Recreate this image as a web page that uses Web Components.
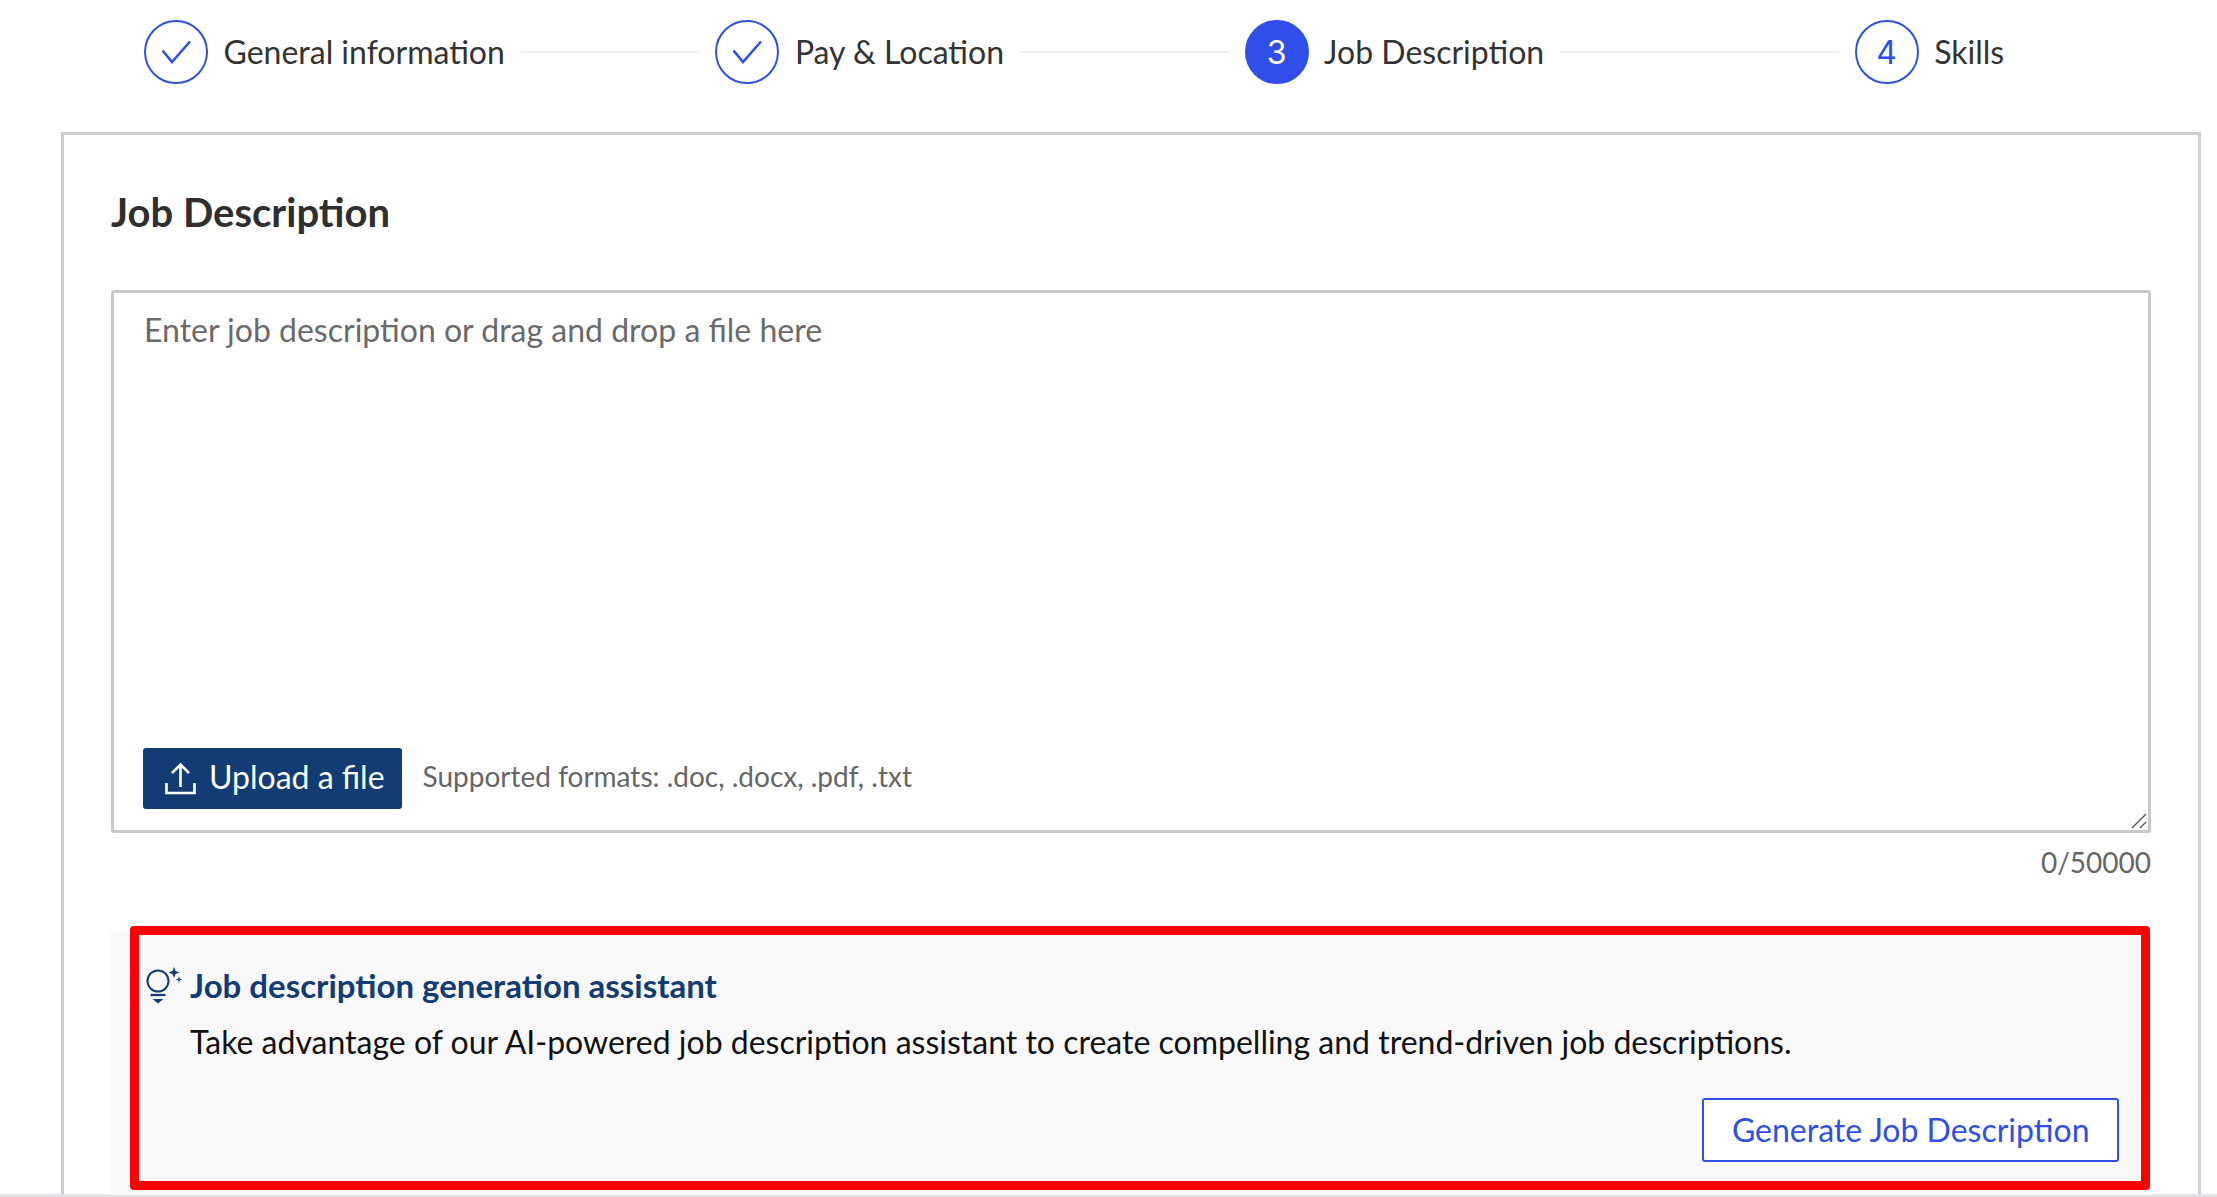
<!DOCTYPE html>
<html lang="en">
<head>
<meta charset="utf-8">
<title>Job Description</title>
<style>
  html, body { margin: 0; height: 100%; background: #fff; overflow: hidden; }
  body { font-family: Lato, "Liberation Sans", sans-serif; color: #333; }
</style>
</head>
<body>
<job-page>
  <job-stepper slot="steps">
    <step-item state="done">General information</step-item>
    <step-line style="width:178.5px"></step-line>
    <step-item state="done">Pay &amp; Location</step-item>
    <step-line style="width:208.5px"></step-line>
    <step-item state="current" num="3">Job Description</step-item>
    <step-line style="width:278.5px"></step-line>
    <step-item num="4">Skills</step-item>
  </job-stepper>
  <job-card>
    <description-box></description-box>
    <assistant-panel></assistant-panel>
  </job-card>
</job-page>

<script>
class JobPage extends HTMLElement {
  constructor() {
    super();
    this.attachShadow({ mode: 'open' }).innerHTML = `
      <style>
        :host { display: flex; flex-direction: column; height: 1197px; overflow: hidden; }
        .main { flex: 1; min-height: 0; padding: 0 16px 0 61px; }
        .edge { height: 3px; background: #dfe3e6; }
      </style>
      <slot name="steps"></slot>
      <div class="main"><slot></slot></div>
      <div class="edge"></div>
    `;
  }
}

class JobStepper extends HTMLElement {
  constructor() {
    super();
    this.attachShadow({ mode: 'open' }).innerHTML = `
      <style>
        :host { display: flex; align-items: center; gap: 16px; height: 132px; padding: 0 0 28px 144px; box-sizing: border-box; }
      </style>
      <slot></slot>
    `;
  }
}

class StepItem extends HTMLElement {
  constructor() {
    super();
    this.attachShadow({ mode: 'open' });
  }

  connectedCallback() {
    const state = this.getAttribute('state');
    const num = this.getAttribute('num') || '';
    const mark = state === 'done'
      ? `<svg width="64" height="64" viewBox="0 0 64 64"><path d="M18.5 30.5 L28 42 L46 21.5" fill="none" stroke="#2f4fe8" stroke-width="2.6"/></svg>`
      : num;
    this.shadowRoot.innerHTML = `
      <style>
        :host { display: flex; align-items: center; gap: 15.5px; flex: none; }
        .dot {
          width: 64px; height: 64px; box-sizing: border-box; border-radius: 50%;
          border: 2px solid #2f4fe8; color: #2f4fe8;
          display: flex; align-items: center; justify-content: center;
          font: 32px Inter, "Liberation Sans", sans-serif; position: relative;
        }
        .dot svg { position: absolute; left: -2px; top: -2px; }
        .dot.current { background: #2f4fe8; color: #fff; }
        .label { font-size: 32px; line-height: 40px; color: #333; white-space: nowrap; }
      </style>
      <div class="dot ${state === 'current' ? 'current' : ''}">${mark}</div>
      <div class="label"><slot></slot></div>
    `;
  }
}

class StepLine extends HTMLElement {
  constructor() {
    super();
    this.attachShadow({ mode: 'open' }).innerHTML = `
      <style>
        :host { display: block; height: 2px; background: #eee; flex: none; }
      </style>
    `;
  }
}

class JobCard extends HTMLElement {
  constructor() {
    super();
    this.attachShadow({ mode: 'open' }).innerHTML = `
      <style>
        :host {
          display: block; height: 100%; box-sizing: border-box;
          border: 3px solid #cdcdd2; border-bottom: 0;
          padding: 0 47px 0 47px;
        }
        h2 { margin: 0; padding-top: 53px; height: 155px; box-sizing: border-box; font-size: 40px; line-height: 48px; font-weight: 700; color: #2f2f2f; }
      </style>
      <h2>Job Description</h2>
      <slot></slot>
    `;
  }
}

class DescriptionBox extends HTMLElement {
  constructor() {
    super();
    this.attachShadow({ mode: 'open' }).innerHTML = `
      <style>
        :host { display: block; }
        .box {
          height: 543px; box-sizing: border-box; position: relative;
          border: 3px solid #c8c8ce; border-radius: 3px;
          padding: 17px 29px 0; display: flex; flex-direction: column;
        }
        .hint { font-size: 32px; line-height: 40px; color: #6a6a6a; flex: 1; padding-left: 1px; }
        .tools { display: flex; align-items: center; gap: 21px; padding-bottom: 21px; }
        .note { font-size: 28px; color: #666; padding-bottom: 5px; }
        .grip { position: absolute; right: 1px; bottom: 1px; }
        .count { text-align: right; font-size: 28px; line-height: 36px; color: #666; margin-top: 11px; height: 37px; }
      </style>
      <div class="box">
        <div class="hint">Enter job description or drag and drop a file here</div>
        <div class="tools">
          <upload-button>Upload a file</upload-button>
          <span class="note">Supported formats: .doc, .docx, .pdf, .txt</span>
        </div>
        <svg class="grip" width="16" height="16" viewBox="0 0 16 16" fill="none" stroke="#555" stroke-width="1.4">
          <path d="M1 15 L15 1 M9 15 L15 9"/>
        </svg>
      </div>
      <div class="count">0/50000</div>
    `;
  }
}

class UploadButton extends HTMLElement {
  constructor() {
    super();
    this.attachShadow({ mode: 'open' }).innerHTML = `
      <style>
        :host {
          display: flex; align-items: center; gap: 13px; height: 61px; box-sizing: border-box;
          padding: 0 17px 0 22px; background: #133c75; color: #fff; border-radius: 3px;
          font-size: 32px; flex: none;
        }
        svg { flex: none; }
        .text { padding-bottom: 5px; }
      </style>
      <svg width="31" height="33" viewBox="0 0 31 33" fill="none" stroke="#fff" stroke-width="2.6">
        <path d="M15.500 25 V3 M7 11 L15.500 2.500 L24 11"/>
        <path d="M1.500 21 V31 H29.500 V21"/>
      </svg>
      <span class="text"><slot></slot></span>
    `;
  }
}

class AssistantPanel extends HTMLElement {
  constructor() {
    super();
    this.attachShadow({ mode: 'open' }).innerHTML = `
      <style>
        :host {
          display: block; position: relative; margin-top: 50px; height: 264px;
          background: #f8f8f8; box-sizing: border-box; padding: 33px 32px 0 79px;
        }
        .head { position: relative; font-size: 33px; line-height: 42px; font-weight: 700; color: #133c75; }
        .head svg { position: absolute; left: -46px; top: 3px; }
        p { margin: 15px 0 0; font-size: 32px; line-height: 42px; color: #111; }
        .actions { display: flex; justify-content: flex-end; margin-top: 35px; }
        .generate {
          height: 64px; box-sizing: border-box; padding: 0 27.500px 2px;
          display: flex; align-items: center;
          border: 2px solid #2f4fe8; border-radius: 3px; background: #fff;
          color: #2f4fe8; font-size: 32px;
        }
        .mark {
          position: absolute; left: 19px; right: 1px; top: -5px; height: 264px;
          box-sizing: border-box; border: 9px solid #f00; border-radius: 4px; pointer-events: none;
        }
      </style>
      <div class="head">
        <svg width="44" height="44" viewBox="0 0 44 44" fill="none" stroke="#133c75">
          <circle cx="14" cy="14" r="10.500" stroke-width="2"/>
          <path d="M6.500 28 H21.500" stroke-width="2.200"/>
          <path d="M8.500 32 H19.500 L14 36.500 Z" fill="#133c75" stroke="none"/>
          <path d="M30 0 L31.500 4 L35.500 5.500 L31.500 7 L30 11 L28.500 7 L24.500 5.500 L28.500 4 Z" fill="#133c75" stroke="none"/>
          <path d="M35 9 L35.800 11.700 L38.500 12.500 L35.800 13.300 L35 16 L34.200 13.300 L31.500 12.500 L34.200 11.700 Z" fill="#133c75" stroke="none"/>
        </svg>
        Job description generation assistant
      </div>
      <p>Take advantage of our AI-powered job description assistant to create compelling and trend-driven job descriptions.</p>
      <div class="actions"><div class="generate">Generate Job Description</div></div>
      <div class="mark"></div>
    `;
  }
}

customElements.define('job-page', JobPage);
customElements.define('job-stepper', JobStepper);
customElements.define('step-item', StepItem);
customElements.define('step-line', StepLine);
customElements.define('job-card', JobCard);
customElements.define('description-box', DescriptionBox);
customElements.define('upload-button', UploadButton);
customElements.define('assistant-panel', AssistantPanel);
</script>
</body>
</html>
